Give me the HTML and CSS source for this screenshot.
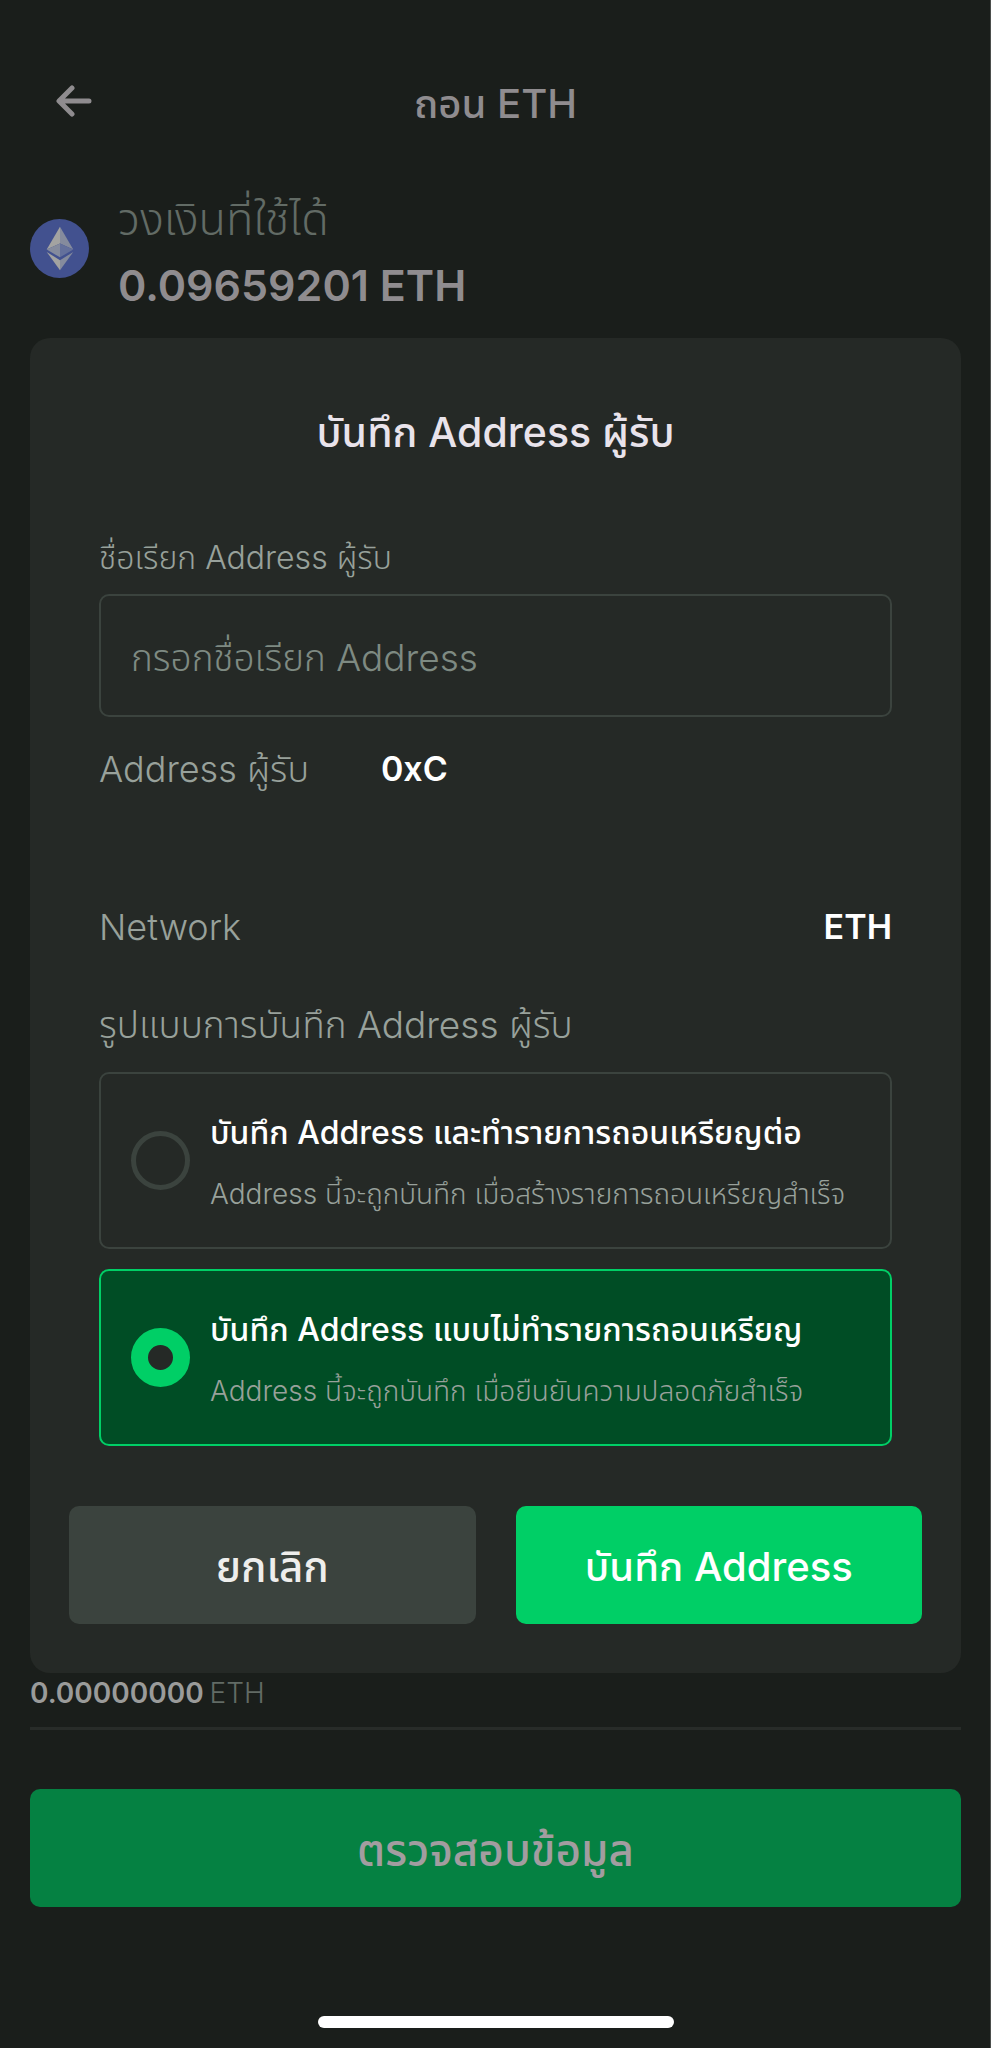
FILE: index.html
```html
<!DOCTYPE html>
<html lang="th">
<head>
<meta charset="utf-8">
<meta name="viewport" content="width=device-width, initial-scale=1">
<title>ถอน ETH</title>
<link rel="stylesheet" href="styles.css">
</head>
<body>
<div class="screen">
  <header class="topbar">
    <button class="back" type="button" aria-label="ย้อนกลับ">
      <svg viewBox="0 0 36 32" width="36" height="32" aria-hidden="true"><path d="M16 3 3 16l13 13M4 16h29" fill="none" stroke="currentColor" stroke-width="5" stroke-linecap="round" stroke-linejoin="round"/></svg>
    </button>
    <h1 class="topbar-title">ถอน ETH</h1>
  </header>

  <section class="balance">
    <svg class="coin" viewBox="0 0 60 60" aria-hidden="true">
      <circle cx="30" cy="30" r="30" fill="#42518f"/>
      <path d="M30.500 8 17 31l13.500-6z" fill="#a3a3a1"/>
      <path d="M30.500 8 44 31l-13.500-6z" fill="#858b9d"/>
      <path d="M17 31l13.500-6v14z" fill="#858b9d"/>
      <path d="M44 31l-13.500-6v14z" fill="#64709b"/>
      <path d="M17 33.500 30.500 42v10z" fill="#a3a3a1"/>
      <path d="M44 33.500 30.500 42v10z" fill="#858b9d"/>
    </svg>
    <div>
      <p class="balance-label">วงเงินที่ใช้ได้</p>
      <p class="balance-value">0.09659201 ETH</p>
    </div>
  </section>

  <form class="dialog" role="dialog" aria-labelledby="dialog-title">
    <h2 class="dialog-title" id="dialog-title">บันทึก Address ผู้รับ</h2>
    <div class="fields">
      <label class="field-label" for="nickname">ชื่อเรียก Address ผู้รับ</label>
      <input class="field-input" id="nickname" type="text" placeholder="กรอกชื่อเรียก Address">
      <dl class="details">
        <div class="detail detail-address"><dt>Address ผู้รับ</dt><dd>0xC</dd></div>
        <div class="detail detail-network"><dt>Network</dt><dd>ETH</dd></div>
      </dl>
      <fieldset class="modes">
        <legend class="modes-label">รูปแบบการบันทึก Address ผู้รับ</legend>
        <label class="mode">
          <input class="mode-radio" type="radio" name="mode">
          <span class="mode-text"><span class="mode-title">บันทึก Address และทำรายการถอนเหรียญต่อ</span><span class="mode-note">Address นี้จะถูกบันทึก เมื่อสร้างรายการถอนเหรียญสำเร็จ</span></span>
        </label>
        <label class="mode">
          <input class="mode-radio" type="radio" name="mode" checked>
          <span class="mode-text"><span class="mode-title">บันทึก Address แบบไม่ทำรายการถอนเหรียญ</span><span class="mode-note">Address นี้จะถูกบันทึก เมื่อยืนยันความปลอดภัยสำเร็จ</span></span>
        </label>
      </fieldset>
    </div>
    <div class="actions">
      <button class="btn btn-cancel" type="button">ยกเลิก</button>
      <button class="btn btn-save" type="button">บันทึก Address</button>
    </div>
  </form>

  <p class="amount"><span class="amount-value">0.00000000</span><span class="amount-unit">ETH</span></p>
  <button class="btn btn-review" type="button">ตรวจสอบข้อมูล</button>
  <div class="home-indicator"></div>
</div>
</body>
</html>
```
FILE: styles.css
```css
* { box-sizing: border-box; margin: 0; padding: 0; }

body {
  background: #1a1e1b;
  font-family: Inter, "Noto Sans Thai", "Noto Sans", sans-serif;
  color: #fff;
}

button, input { font: inherit; color: inherit; }

.screen {
  display: flex;
  flex-direction: column;
  min-height: 100vh;
  padding: 64px 30px 20px;
  box-shadow: inset -1px 0 #4b4e4c;
}

.topbar {
  display: grid;
  grid-template-columns: 88px 1fr 88px;
  align-items: center;
  height: 80px;
  color: #8f8c8f;
}
.back {
  display: flex;
  align-items: center;
  height: 74px;
  padding-left: 26px;
  align-self: start;
  background: none;
  border: 0;
}
.topbar-title { grid-column: 2; text-align: center; font-size: 40px; line-height: 80px; font-weight: 500; }

.balance {
  display: flex;
  align-items: flex-start;
  gap: 29px;
  margin: 42px 0 20px;
}
.coin { width: 59px; height: 59px; margin-top: 33px; flex: none; }
.balance-label { font-size: 45px; line-height: 66px; font-weight: 300; color: #626b65; }
.balance-value { font-size: 43px; line-height: 66px; font-weight: 600; color: #8f8c8f; }

.dialog { background: #252926; border-radius: 20px; padding: 64px 39px 49px; }
.dialog-title { text-align: center; font-size: 41px; line-height: 60px; font-weight: 500; color: #e9e3eb; }

.fields { padding: 74px 30px 60px; color: #98a19b; font-weight: 300; }
.field-label { display: block; font-size: 32px; line-height: 44px; margin-bottom: 14px; }
.field-input {
  display: block;
  width: 100%;
  height: 123px;
  padding: 4px 30px 0;
  border: 2px solid #3b433e;
  border-radius: 10px;
  background: transparent;
  font-size: 37px;
}
.field-input::placeholder { color: #7e8a82; opacity: 1; }

.detail { display: flex; font-size: 36px; line-height: 48px; }
.detail dd { font-size: 34px; font-weight: 600; color: #fff; }
.detail-address { gap: 72px; margin-top: 28px; }
.detail-network { justify-content: space-between; margin-top: 110px; }

.modes { border: 0; margin-top: 50px; min-width: 0; }
.modes-label { font-size: 37px; line-height: 48px; margin-bottom: 23px; }
.mode {
  display: flex;
  align-items: center;
  gap: 20px;
  height: 177px;
  padding: 0 30px;
  border: 2px solid #3b433e;
  border-radius: 10px;
}
.mode + .mode { margin-top: 20px; }
.mode:has(:checked) { background: #004d25; border-color: #00cf66; }
.mode-radio {
  appearance: none;
  flex: none;
  width: 59px;
  height: 59px;
  border: 5px solid #3b433e;
  border-radius: 50%;
}
.mode-radio:checked { border: 17px solid #00cf66; background: #252926; }
.mode-text { display: flex; flex-direction: column; gap: 17px; padding-top: 5px; white-space: nowrap; }
.mode-title { font-size: 32px; line-height: 44px; font-weight: 500; color: #fff; }
.mode-note { font-size: 28px; line-height: 44px; }

.actions { display: grid; grid-template-columns: 1fr 1fr; gap: 40px; }
.btn { height: 118px; padding-top: 8px; border: 0; border-radius: 10px; font-size: 40px; font-weight: 500; }
.btn-cancel { background: #3b433e; color: #eeeeec; font-size: 42px; }
.btn-save { background: #00cf66; }

.amount {
  display: flex;
  gap: 6px;
  font-size: 28px;
  line-height: 40px;
  padding-bottom: 14px;
  border-bottom: 3px solid #282c29;
}
.amount-value { color: #9a9b9a; font-weight: 600; }
.amount-unit { color: #626b65; font-weight: 300; }
.btn-review { margin-top: 59px; background: #058142; color: #a29da0; font-size: 44px; }
.home-indicator { width: 356px; height: 12px; margin: auto auto 0; border-radius: 6px; background: #fff; }
```
